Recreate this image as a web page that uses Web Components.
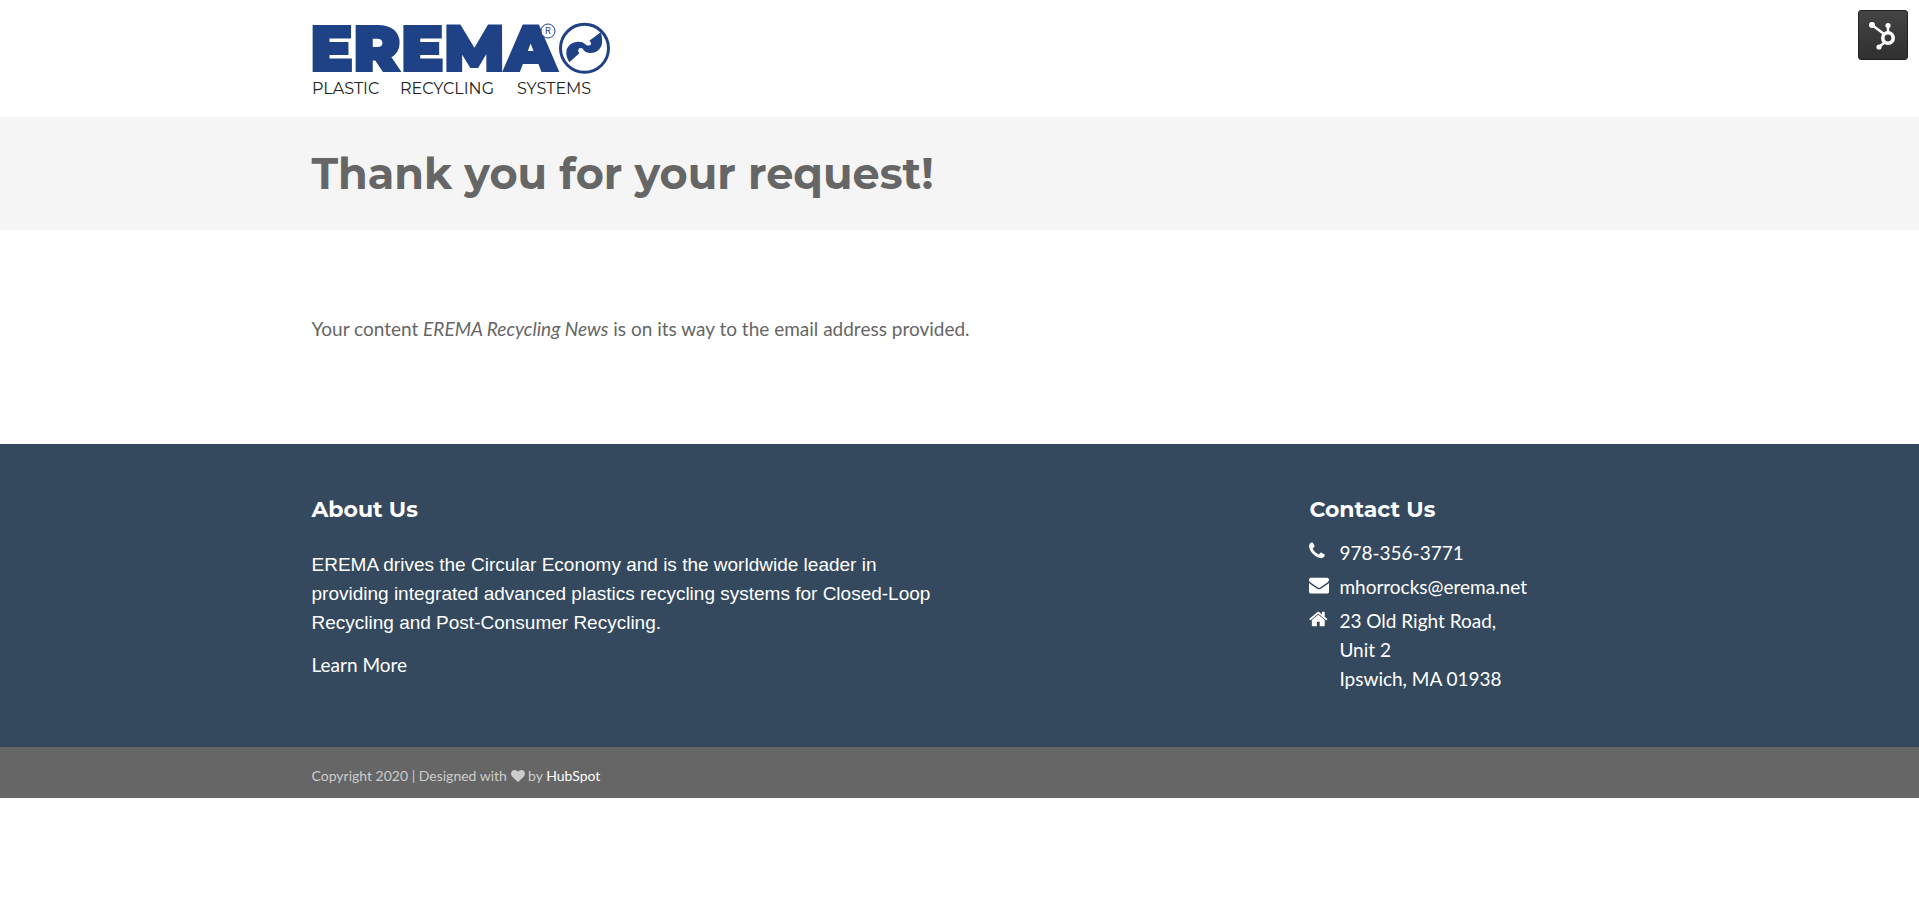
<!DOCTYPE html>
<html lang="en">
<head>
<meta charset="utf-8">
<meta name="viewport" content="width=device-width, initial-scale=1">
<title>Thank you for your request!</title>
<style>
  body { margin: 0; background: #fff; color: #666; font: 19px/29px Lato, "Liberation Sans", sans-serif; --title: Montserrat, Inter, sans-serif; }
  a { color: #fff; text-decoration: none; }
</style>
</head>
<body>
<site-header></site-header>
<page-title>Thank you for your request!</page-title>
<page-message>Your content <em>EREMA Recycling News</em> is on its way to the email address provided.</page-message>
<site-footer></site-footer>
<site-copyright></site-copyright>

<script>
const define = (name, html) => customElements.define(name, class extends HTMLElement {
  constructor() {
    super();
    const t = document.createElement('template');
    t.innerHTML = html;
    this.attachShadow({ mode: 'open' }).append(t.content.cloneNode(true));
  }
});

/* Centred column shared by every band */
define('page-wrap', `
  <style>
    :host { display: block; box-sizing: border-box; max-width: 1336px; margin: 0 auto; padding: 0 20px; }
  </style>
  <slot></slot>`);

define('brand-logo', `
  <style>
    :host { display: block; }
    a { display: block; width: 298px; }
    svg { display: block; overflow: visible; }
    .word { font: 900 64px Montserrat, Inter, sans-serif; fill: #1f4286; stroke: #1f4286; stroke-width: 2; }
    .tag { font: 400 16px Montserrat, Inter, sans-serif; fill: #222; }
    .reg { font: 400 9px Inter, sans-serif; fill: #1f4286; text-anchor: middle; }
  </style>
  <a href="#" aria-label="EREMA Plastic Recycling Systems">
    <svg width="298" height="69" viewBox="0 0 298 69">
      <text class="word" x="-2" y="48">EREMA</text>
      <circle cx="236" cy="8" r="7" fill="#fff" stroke="#1f4286" stroke-width="1"/>
      <text class="reg" x="236" y="11">R</text>
      <circle cx="272.5" cy="25.3" r="24" fill="#fff" stroke="#1f4286" stroke-width="3"/>
      <path transform="translate(-12 -13) scale(.33333)" fill="#1f4286" d="M808 157L838 130Q831 121 838 115Q847 112 851 120Q856 129 873 129Q895 128 904 108Q910 90 902 67L868 92Q876 98 871 106Q860 108 855 102Q848 94 833 95Q808 97 800 118Q796 140 808 157Z"/>
      <text class="tag" x="0" y="71">PLASTIC</text>
      <text class="tag" x="88" y="71">RECYCLING</text>
      <text class="tag" x="205" y="71">SYSTEMS</text>
    </svg>
  </a>`);

define('tools-button', `
  <style>
    :host { display: block; position: absolute; top: 10px; right: 11px; }
    button { display: block; width: 50px; height: 50px; padding: 0; border: 1px solid #222; border-radius: 3px; background: linear-gradient(#444, #303030); cursor: pointer; }
    svg { display: block; }
  </style>
  <button type="button" aria-label="HubSpot tools">
    <svg width="48" height="48" viewBox="0 0 48 48" fill="none" stroke="#fff">
      <path d="M13 14L25 23M29 14V21M26 31L20 36" stroke-width="2.4"/>
      <circle cx="29" cy="27" r="5.2" stroke-width="3.6"/>
      <g fill="#fff" stroke="none"><circle cx="13" cy="14" r="3"/><circle cx="29" cy="14.500" r="2.600"/><circle cx="20" cy="36" r="2.600"/></g>
    </svg>
  </button>`);

define('site-header', `
  <style>
    :host { display: block; padding: 23px 0 25px; }
  </style>
  <page-wrap><brand-logo></brand-logo></page-wrap>
  <tools-button></tools-button>`);

define('page-title', `
  <style>
    :host { display: block; padding: 29px 0 28px; background: #f5f5f5; }
    h1 { margin: 0; color: #666; font: 700 43px/56px var(--title); }
  </style>
  <page-wrap><h1><slot></slot></h1></page-wrap>`);

define('page-message', `
  <style>
    :host { display: block; padding: 84px 0 101px; }
    p { margin: 0; }
  </style>
  <page-wrap><p><slot></slot></p></page-wrap>`);

const icons = {
  phone: '192 0 1792 1792|M1600 1240q0 27-10 70.5t-21 68.5q-21 50-122 106-94 51-186 51-27 0-53-3.5t-57.5-12.5-47-14.5-55.5-20.5-49-18q-98-35-175-83-127-79-264-216t-216-264q-48-77-83-175-3-9-18-49t-20.5-55.5-14.5-47-12.5-57.5-3.5-53q0-92 51-186 56-101 106-122 25-11 68.5-21t70.5-10q14 0 21 3 18 6 53 76 11 19 30 54t35 63.5 31 53.5q3 4 17.5 25t21.5 35.5 7 28.5q0 20-28.5 50t-62 55-62 53-28.5 46q0 9 5 22.5t8.5 20.5 14 24 11.5 19q76 137 174 235t235 174q2 1 19 11.5t24 14 20.5 8.5 22.5 5q18 0 46-28.5t53-62 55-62 50-28.5q14 0 28.5 7t35.5 21.5 25 17.500q25 15 53.500 31t63.500 35 54 30q70 35 76 53 3 7 3 21z',
  mail: '0 0 1792 1792|M1792 710v794q0 66-47 113t-113 47h-1472q-66 0-113-47t-47-113v-794q44 49 101 87 362 246 497 345 57 42 92.5 65.5t94.5 48 110 24.5h2q51 0 110-24.5t94.5-48 92.5-65.5q170-123 498-345 57-39 100-87zm0-294q0 79-49 151t-122 123q-376 261-468 325-10 7-42.5 31t-54 38.5-52 32.5-57.5 27-50 9h-2q-23 0-50-9t-57.5-27-52-32.5-54-38.5-42.5-31q-91-64-262-182.5t-205-142.5q-62-42-117-115.5t-55-136.5q0-78 41.5-130t118.5-52h1472q65 0 112.5 47t47.5 113z',
  home: '64 0 1792 1792|M1472 992v480q0 26-19 45t-45 19h-384v-384h-256v384h-384q-26 0-45-19t-19-45v-480q0-1 .5-3t.5-3l575-474 575 474q1 2 1 6zm223-69l-62 74q-8 9-21 11h-3q-13 0-21-7l-692-577-692 577q-12 8-24 7-13-2-21-11l-62-74q-8-10-7-23.5t11-21.5l719-599q32-26 76-26t76 26l244 204v-195q0-14 9-23t23-9h192q14 0 23 9t9 23v408l219 182q10 8 11 21.5t-7 23.5z',
  heart: '0 0 1792 1792|M896 1664q-26 0-44-18l-624-602q-10-8-27.5-26t-55.5-65.5-68-97.5-53.5-121-23.5-138q0-220 127-344t351-124q62 0 126.5 21.5t120 58 95.5 68.5 76 68q36-36 76-68t95.5-68.5 120-58 126.5-21.5q224 0 351 124t127 344q0 221-229 450l-623 600q-18 18-44 18z'
};
customElements.define('ui-icon', class extends HTMLElement {
  connectedCallback() {
    if (this.shadowRoot) return;
    const [box, d] = icons[this.getAttribute('name')].split('|');
    this.attachShadow({ mode: 'open' }).innerHTML = `
      <style>:host { display: inline-block; width: 20px; height: 20px; } svg { display: block; width: 100%; height: 100%; fill: currentColor; }</style>
      <svg viewBox="${box}" aria-hidden="true"><path d="${d}"/></svg>`;
  }
});

define('contact-item', `
  <style>
    :host { display: grid; grid-template-columns: 20px 1fr; column-gap: 10px; margin-bottom: 5px; }
    ::slotted(ui-icon) { margin-top: 3px; }
  </style>
  <slot name="icon"></slot><div><slot></slot></div>`);

define('site-footer', `
  <style>
    :host { display: block; padding: 51px 0 49px; background: #34495e; color: #fff; }
    .cols { display: grid; grid-template-columns: 77fr 23fr; }
    h2 { margin: 0; font: 700 22px/30px var(--title); }
    .about { max-width: 640px; }
    .about p { margin: 25px 0 13px; font-family: "Liberation Sans", Arial, sans-serif; }
    address { margin-top: 13px; font-style: normal; }
    a { color: #fff; text-decoration: none; }
  </style>
  <page-wrap><div class="cols">
    <section class="about">
      <h2>About Us</h2>
      <p>EREMA drives the Circular Economy and is the worldwide leader in providing integrated advanced plastics recycling systems for Closed-Loop Recycling and Post-Consumer Recycling.</p>
      <a href="#">Learn More</a>
    </section>
    <section>
      <h2>Contact Us</h2>
      <address>
        <contact-item><ui-icon slot="icon" name="phone"></ui-icon>978-356-3771</contact-item>
        <contact-item><ui-icon slot="icon" name="mail"></ui-icon><a href="mailto:mhorrocks@erema.net">mhorrocks@erema.net</a></contact-item>
        <contact-item><ui-icon slot="icon" name="home"></ui-icon>23 Old Right Road,<br>Unit 2<br>Ipswich, MA 01938</contact-item>
      </address>
    </section>
  </div></page-wrap>`);

define('site-copyright', `
  <style>
    :host { display: block; padding: 18px 0 11px; background: #666; color: #ccc; font-size: 14px; line-height: 22px; }
    ui-icon { width: 14px; height: 14px; vertical-align: -2px; }
    a { color: #fff; text-decoration: none; }
  </style>
  <page-wrap>Copyright 2020 | Designed with <ui-icon name="heart"></ui-icon> by <a href="#">HubSpot</a></page-wrap>`);
</script>
</body>
</html>
